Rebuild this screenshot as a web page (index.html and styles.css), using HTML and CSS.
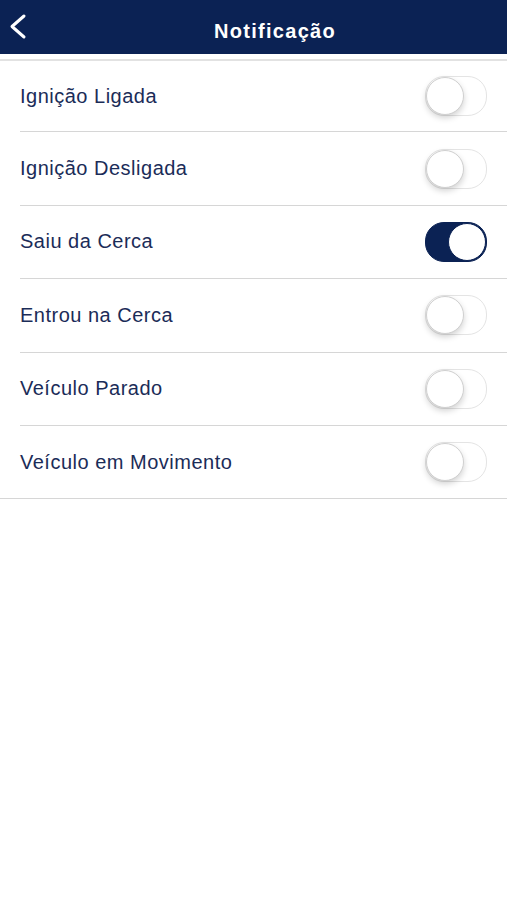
FILE: index.html
```html
<!DOCTYPE html>
<html lang="pt-BR">
<head>
  <meta charset="UTF-8" />
  <title>Notificação</title>
  <link rel="stylesheet" href="styles.css">
</head>
<body>
  <header class="top-bar">
    <button class="back-btn" aria-label="Voltar">
      <svg width="20" height="30" viewBox="0 0 20 30">
        <path d="M15 3 L3 13.5 L15 24" fill="none" stroke="#fff" stroke-width="3" stroke-linecap="round" stroke-linejoin="round" />
      </svg>
    </button>
    <h1 class="title">Notificação</h1>
  </header>

  <ul class="notif-list">
    <li class="notif-row">
      <span class="label">Ignição Ligada</span>
      <span class="switch"></span>
    </li>
    <li class="notif-row">
      <span class="label">Ignição Desligada</span>
      <span class="switch"></span>
    </li>
    <li class="notif-row">
      <span class="label">Saiu da Cerca</span>
      <span class="switch on"></span>
    </li>
    <li class="notif-row">
      <span class="label">Entrou na Cerca</span>
      <span class="switch"></span>
    </li>
    <li class="notif-row">
      <span class="label">Veículo Parado</span>
      <span class="switch"></span>
    </li>
    <li class="notif-row last">
      <span class="label">Veículo em Movimento</span>
      <span class="switch"></span>
    </li>
  </ul>
</body>
</html>
```

FILE: styles.css
```css
body {
  margin: 0;
  font-family: 'Liberation Sans', Arial, sans-serif;
  background: #fff;
}

.top-bar {
  height: 54px;
  background: #0b2254;
  display: flex;
  align-items: center;
}

.back-btn {
  align-self: flex-start;
  border: none;
  background: none;
  padding: 0;
  margin: 13px 0 0 9px;
  display: flex;
}

.title {
  flex: 1;
  margin: 0;
  padding-left: 14px;
  padding-top: 9px;
  text-align: center;
  color: #fff;
  font-size: 20px;
  font-weight: bold;
  letter-spacing: 1.3px;
}

.notif-list {
  list-style: none;
  margin: 5px 0 0;
  padding: 0;
  border-top: 2px solid #e2e2e2;
}

.notif-row {
  display: flex;
  align-items: center;
  justify-content: space-between;
  height: 72.4px;
  margin-left: 20px;
  padding-right: 20px;
  border-bottom: 1px solid #d6d6d6;
}

.notif-row:first-child {
  height: 70.4px;
}

.notif-row.last {
  margin-left: 0;
  padding-left: 20px;
}

.label {
  font-size: 20px;
  letter-spacing: 0.5px;
  color: #1b2c58;
}

.switch {
  width: 60px;
  height: 38px;
  border-radius: 19px;
  border: 1px solid #e4e4e4;
  background: #fff;
  position: relative;
}

.switch::after {
  content: "";
  position: absolute;
  top: 0;
  left: 0;
  width: 36px;
  height: 36px;
  border-radius: 50%;
  background: #fff;
  border: 1px solid #d0d0d0;
  box-shadow: 0 3px 6px rgba(0, 0, 0, 0.18);
}

.switch.on {
  background: #0b2254;
  border-color: #0b2254;
}

.switch.on::after {
  left: 22px;
  border-color: #0b2254;
  box-shadow: none;
}
```
